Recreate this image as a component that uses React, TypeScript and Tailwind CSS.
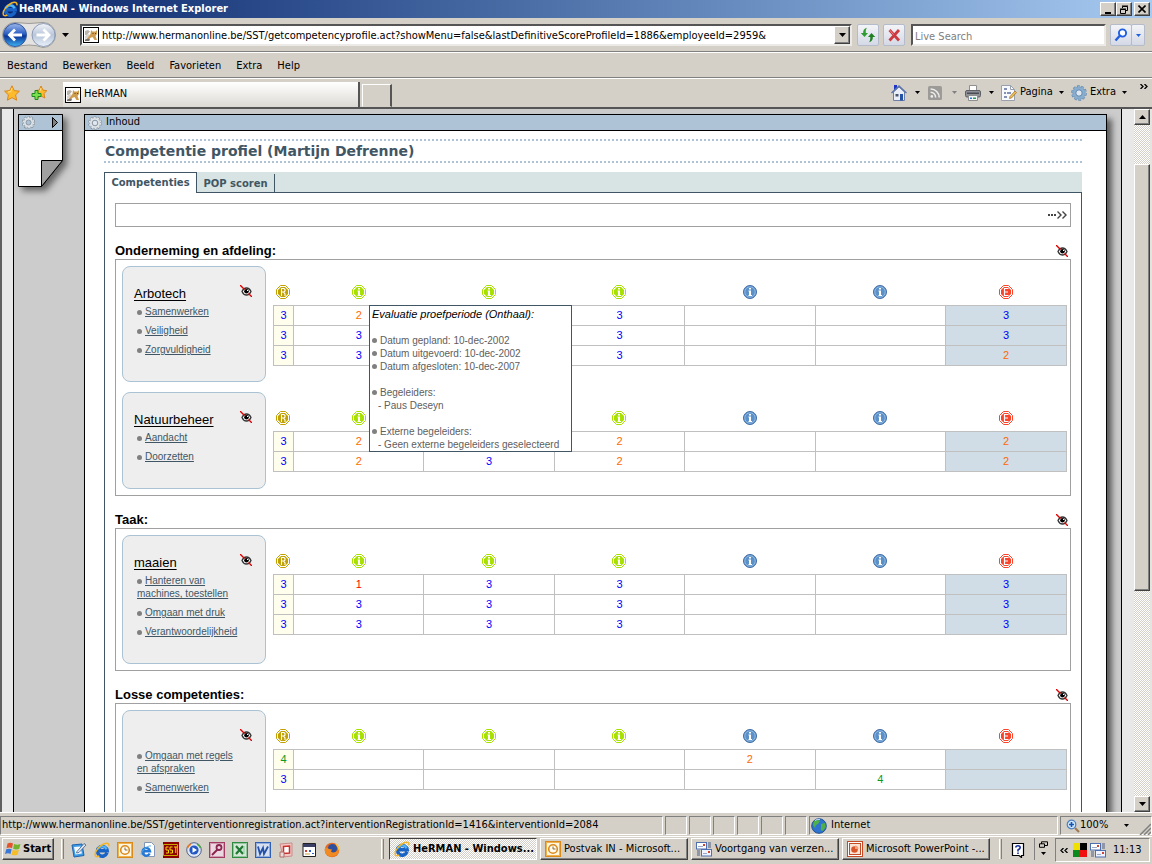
import type { ReactNode } from "react";

type Score = number | null;

interface Group {
  title?: string;
  items: string[];
  scores: Score[][];
  tooltip?: boolean;
}

const sections: { title: string; groups: Group[] }[] = [
  {
    title: "Onderneming en afdeling:",
    groups: [
      {
        title: "Arbotech",
        items: ["Samenwerken", "Veiligheid", "Zorgvuldigheid"],
        scores: [
          [3, 2, null, 3, null, null, 3],
          [3, 3, null, 3, null, null, 3],
          [3, 3, null, 3, null, null, 2],
        ],
        tooltip: true,
      },
      {
        title: "Natuurbeheer",
        items: ["Aandacht", "Doorzetten"],
        scores: [
          [3, 2, null, 2, null, null, 2],
          [3, 2, 3, 2, null, null, 2],
        ],
      },
    ],
  },
  {
    title: "Taak:",
    groups: [
      {
        title: "maaien",
        items: [
          "Hanteren van machines, toestellen",
          "Omgaan met druk",
          "Verantwoordelijkheid",
        ],
        scores: [
          [3, 1, 3, 3, null, null, 3],
          [3, 3, 3, 3, null, null, 3],
          [3, 3, 3, 3, null, null, 3],
        ],
      },
    ],
  },
  {
    title: "Losse competenties:",
    groups: [
      {
        items: ["Omgaan met regels en afspraken", "Samenwerken"],
        scores: [
          [4, null, null, null, 2, null, null],
          [3, null, null, null, null, 4, null],
        ],
      },
    ],
  },
];

const scoreColors: Record<number, string> = {
  1: "text-[#ff0000]",
  2: "text-[#ff6a00]",
  3: "text-[#0000ff]",
  4: "text-[#0a9a1e]",
};

const raised =
  "border border-t-white border-l-white border-r-[#404040] border-b-[#404040] shadow-[inset_-1px_-1px_0_#808080] bg-[#d4d0c8]";
const sunken =
  "border border-t-[#808080] border-l-[#808080] border-r-white border-b-white";
const checker =
  "bg-[repeating-conic-gradient(#ffffff_0_25%,#d4d0c8_0_50%)] bg-[length:2px_2px]";

/* ---------- icons ---------- */

const IeIcon = ({ className = "size-4" }: { className?: string }) => (
  <svg viewBox="0 0 16 16" className={`shrink-0 ${className}`}>
    <path
      d="M13 10.8A4.900 4.900 0 1 1 13.200 8.700H5"
      fill="none"
      stroke="#1a63c6"
      strokeWidth="3.4"
    />
    <path
      d="M12.600 7.200A4.900 4.900 0 0 0 3.800 7.200"
      fill="none"
      stroke="#4fb3f6"
      strokeWidth="2.2"
    />
    <path
      d="M14.800 4.400C15.600 1.400 13 .4 9.600 2 5.400 3.900 1.200 9 1.100 12.400c0 2.600 2.200 2.800 4.200 1.600"
      fill="none"
      stroke="#f2b52a"
      strokeWidth="1.5"
    />
  </svg>
);

const FoxIcon = () => (
  <svg viewBox="0 0 16 16" className="size-4 shrink-0">
    <rect x=".5" y=".5" width="15" height="15" fill="#fff" stroke="#000" />
    <path d="M2 4l3-1 2 1.5L4 8H2z" fill="#b9b4ac" />
    <path d="M2 9l3-2 2 1-2 3-3 1z" fill="#d8d4cc" />
    <path d="M8 3l1.500 1.500h3L14 3v4l-1.500 2L14 13h-2.500L9.500 10 7 11l-1 3-3-.5L6 9l1.500-2z" fill="#cf9c4e" />
    <path d="M9.500 6h1v1h-1zM12 6h1v1h-1z" fill="#6b431a" />
    <path d="M2 12.500l3-1 2 1-1 1.500H2z" fill="#77716a" />
  </svg>
);

const Caret = ({ color = "#000" }: { color?: string }) => (
  <svg viewBox="0 0 5 3" className="h-[3px] w-[5px] shrink-0">
    <path d="M0 0h5L2.5 3z" fill={color} />
  </svg>
);

const BigCaret = ({ up = false }: { up?: boolean }) => (
  <svg viewBox="0 0 7 4" className="h-1 w-[7px] shrink-0">
    <path d={up ? "M0 4h7L3.5 0z" : "M0 0h7L3.5 4z"} fill="#000" />
  </svg>
);

const NavButtons = () => (
  <svg viewBox="0 0 56 28" className="h-7 w-14 shrink-0">
    <defs>
      <linearGradient id="back" x1="0" y1="0" x2="0" y2="1">
        <stop offset="0" stopColor="#9db8ea" />
        <stop offset=".45" stopColor="#2c5fc4" />
        <stop offset=".55" stopColor="#0b3596" />
        <stop offset="1" stopColor="#3fb4f5" />
      </linearGradient>
      <linearGradient id="fwd" x1="0" y1="0" x2="0" y2="1">
        <stop offset="0" stopColor="#f2f5fa" />
        <stop offset=".5" stopColor="#b9c6da" />
        <stop offset="1" stopColor="#e9f1fb" />
      </linearGradient>
    </defs>
    <path
      d="M14 1.500q14 2 28 0a12.500 12.500 0 0 1 0 25q-14-5-28 0a12.500 12.500 0 0 1 0-25z"
      fill="#e4e3e2"
      stroke="#9c9a98"
    />
    <circle cx="14" cy="14" r="11.5" fill="url(#back)" stroke="#35579c" />
    <circle cx="42.500" cy="14" r="11.5" fill="url(#fwd)" stroke="#8d9bb4" />
    <path d="M21 14H9M14 8.500L8.500 14l5.500 5.500" fill="none" stroke="#fff" strokeWidth="2.8" />
    <path d="M35.500 14h12M42.500 8.500L48 14l-5.500 5.500" fill="none" stroke="#fff" strokeWidth="2.8" />
  </svg>
);

const Star = ({ add = false }: { add?: boolean }) => (
  <svg viewBox="0 0 16 16" className="size-4 shrink-0">
    <path
      d={
        add
          ? "M10 1l2 4.200 3.800.4-2.800 3 .8 4.400-3.800-2-3 1.500L7 9 4.500 5.600 8.300 5z"
          : "M8 .8l2.200 4.800 5.200.6-3.800 3.600 1 5.400L8 12.600l-4.600 2.600 1-5.400L.6 6.200l5.200-.6z"
      }
      fill="#fdbb2c"
      stroke="#d9861a"
    />
    <path d={add ? "M10 3l-1 3" : "M8 3L6.800 6.600 4 7"} stroke="#ffe28a" fill="none" />
    {add && (
      <path
        d="M4 5.500h3v3h3v3H7v3H4v-3H1v-3h3z"
        fill="#7be04e"
        stroke="#1c8a1c"
      />
    )}
  </svg>
);

const GearIcon = ({
  className = "size-4",
  color = "#8aaed0",
  edge = "#5f87ad",
}: {
  className?: string;
  color?: string;
  edge?: string;
}) => (
  <svg viewBox="0 0 16 16" className={`shrink-0 ${className}`}>
    <circle cx="8" cy="8" r="6.6" fill="none" stroke={edge} strokeWidth="2.4" strokeDasharray="2.6 1.547" />
    <circle cx="8" cy="8" r="6.2" fill={color} stroke={edge} strokeWidth=".6" />
    <circle cx="8" cy="8" r="6.2" fill="none" stroke={color} strokeWidth="2" strokeDasharray="2 1.895" />
    <circle cx="8" cy="8" r="3.2" fill="#dfe8f0" stroke={edge} strokeWidth="1" />
  </svg>
);

const HomeIcon = () => (
  <svg viewBox="0 0 16 16" className="size-4">
    <path d="M3 0h3v5H3z" fill="#1d35c9" />
    <path d="M2.500 7L8 2l5.500 5v8.500h-11z" fill="#e9eef7" stroke="#6d7fa8" />
    <path d="M.5 8L8 1l7.500 7" fill="none" stroke="#5a73ad" strokeWidth="1.4" />
    <path d="M9 9h3v6.500H9z" fill="#2450a8" />
    <path d="M4.500 9h3v2.500h-3z" fill="#46556b" />
  </svg>
);

const RssIcon = () => (
  <svg viewBox="0 0 14 14" className="size-3.5">
    <rect width="14" height="14" rx="1.5" fill="#9c9b98" />
    <circle cx="3.800" cy="10.400" r="1.3" fill="#eee" />
    <path
      d="M2.600 6.300a5 5 0 0 1 5 5.200M2.600 3a8.400 8.400 0 0 1 8.600 8.500"
      fill="none"
      stroke="#eee"
      strokeWidth="1.5"
    />
  </svg>
);

const PrinterIcon = () => (
  <svg viewBox="0 0 16 16" className="size-4">
    <path d="M4.500.5h7V6h-7z" fill="#fff" stroke="#8f8f8f" />
    <rect x=".5" y="5.500" width="15" height="6.500" rx="1.5" fill="#8e9298" stroke="#5c5f65" />
    <path d="M2 7.500h12v1.500H2z" fill="#4a4d52" />
    <path d="M3.500 10.500h9v5h-9z" fill="#f5f8fb" stroke="#8f8f8f" />
    <path d="M5 12.500h2v1.500H5z" fill="#2c7ad6" />
    <path d="M8 12.500h3v1.500H8z" fill="#2a9d5f" />
  </svg>
);

const PageIcon = () => (
  <svg viewBox="0 0 16 16" className="size-4">
    <path d="M.5.500h9l4 4v11H.5z" fill="#f8f9fc" stroke="#98a0ae" />
    <path d="M9.500.5v4h4" fill="none" stroke="#98a0ae" />
    <path d="M3 4h3M3 8h2m1 0h4M3 12h3" stroke="#5d6c9c" strokeWidth="1.3" />
    <path d="M8.500 13.500l.5-2 5-5.500 1.500 1.500-5 5.500z" fill="#efc050" stroke="#9b6c2c" strokeWidth=".7" />
  </svg>
);

const RefreshIcon = () => (
  <svg viewBox="0 0 16 16" className="size-4">
    <path d="M7 .8C4 1.600 3 3.600 3.200 6H.8l3.700 4 3.500-4H5.800C5.500 4 6 2 7 .8z" fill="#2f9c2f" />
    <path d="M9 15.200c3-.8 4-2.800 3.800-5.200h2.400l-3.700-4L8 10h2.200c.3 2-.2 4-1.200 5.200z" fill="#1f7f22" />
  </svg>
);

const StopIcon = () => (
  <svg viewBox="0 0 14 14" className="size-3.5">
    <path d="M2.500 2l9.500 10.500M12 2L2.500 12.500" stroke="#cb3a3e" strokeWidth="2.8" />
    <path d="M2.500 2l4 4.500" stroke="#ec8c8c" strokeWidth="1" />
  </svg>
);

const SearchIcon = () => (
  <svg viewBox="0 0 14 14" className="size-3.5">
    <circle cx="8.500" cy="5" r="3.6" fill="#fff" stroke="#1f5fe0" strokeWidth="1.9" />
    <path d="M5.800 7.800L1.500 12.500" stroke="#1f5fe0" strokeWidth="2.4" />
  </svg>
);

const HiddenEye = () => (
  <svg viewBox="0 0 12 12" className="size-3">
    <path d="M2 6.500Q3.500 3 6.500 3T11 6.500Q9.500 10 6.500 10T2 6.500z" fill="#fff" stroke="#333" strokeWidth="1.3" />
    <circle cx="6.500" cy="6.300" r="2.3" fill="#000" />
    <path d="M7 5h1v1H7z" fill="#fff" />
    <path d="M0 0l4.500 4.500M8.500 8.500L12 12" stroke="#e00000" strokeWidth="1.4" />
  </svg>
);

const Octagon = ({ color, kind }: { color: string; kind: "R" | "i" | "E" }) => (
  <svg viewBox="0 0 14 14" className="size-3.5">
    <path d="M4.500.500h5l4 4v5l-4 4h-5l-4-4v-5z" fill="#fff" stroke={color} />
    <path d="M5 2h4l3 3v4l-3 3H5L2 9V5z" fill={color} />
    {kind === "i" && <path d="M6 3h2v1.500H6zM5.500 5.500H8V10h1v1H5.500v-1H6V6.500h-.5z" fill="#fff" />}
    {kind === "R" && (
      <path d="M5.500 11V3.500H8l1 1V6L8 7H5.500M7.500 7L9 9v2" fill="none" stroke="#fff" strokeWidth="1.1" />
    )}
    {kind === "E" && <path d="M9.500 3.500H5.500v7h4M5.500 7h3.500" fill="none" stroke="#fff" strokeWidth="1.2" />}
  </svg>
);

const BlueInfo = () => (
  <svg viewBox="0 0 14 14" className="size-3.5">
    <circle cx="7" cy="7" r="6.5" fill="#5b91c9" stroke="#3f6ca6" />
    <circle cx="7" cy="7" r="5.2" fill="none" stroke="#9cc0e4" strokeWidth=".8" />
    <path d="M6 3h2v1.500H6zM5.500 5.500H8V10h1v1H5.500v-1H6V6.500h-.5z" fill="#fff" />
  </svg>
);

const Windows = () => (
  <svg viewBox="0 0 16 16" className="size-4">
    <path d="M2.500 2.500q3-1.500 5.500 0L7 7.200q-2.500-1.200-5.500 0z" fill="#e5532a" />
    <path d="M9 3q3 1.500 6.500 0l-1.300 4.800q-3 1.200-6 0z" fill="#73b32c" />
    <path d="M1.200 8.300q3-1.300 5.500 0l-1.200 4.700q-2.500-1.300-5.500 0z" fill="#3a78d8" />
    <path d="M7.700 8.800q3 1.300 6.200 0l-1.400 4.900q-3 1.300-6 0z" fill="#f5bd27" />
  </svg>
);

const OutlookIcon = () => (
  <svg viewBox="0 0 16 16" className="size-4 shrink-0">
    <rect x=".5" y=".5" width="15" height="15" fill="#fdf0cf" stroke="#d98a1c" />
    <rect x="1.500" y="1.500" width="13" height="13" fill="#fff6e0" stroke="#efb24c" />
    <circle cx="8" cy="8" r="4.3" fill="#fffaf0" stroke="#d98a1c" strokeWidth="1.6" />
    <path d="M8 5.500V8h2.500" fill="none" stroke="#8a6a30" />
  </svg>
);

const MailIcon = () => (
  <svg viewBox="0 0 16 16" className="size-4 shrink-0">
    <rect x=".5" y="1.500" width="10" height="6.500" fill="#fff" stroke="#4e6fb0" />
    <path d="M7 3h2v2H7z" fill="#d2432f" />
    <path d="M12 2h3M12 4h3M12 6h3M1 10h3M1 12h3M1 14h3" stroke="#4b5f85" />
    <rect x="5.500" y="8.500" width="10" height="6.500" fill="#eef3ff" stroke="#4e6fb0" />
    <path d="M12 10h2v2h-2z" fill="#d2432f" />
    <path d="M2 5.500h5M7 12.500h4" stroke="#9aa9c9" />
  </svg>
);

const PowerPointIcon = () => (
  <svg viewBox="0 0 16 16" className="size-4 shrink-0">
    <rect x=".5" y=".5" width="15" height="15" fill="#fff" stroke="#c34a25" />
    <rect x="2.500" y="2.500" width="11" height="11" fill="#fbe3d6" stroke="#c34a25" />
    <circle cx="7.500" cy="8.500" r="3.3" fill="#d9552c" />
    <path d="M8 8V4.500A3.500 3.500 0 0 1 11.500 8z" fill="#f5a079" />
  </svg>
);

// square office icon with a drawn mark inside
const OfficeTile = ({ color, children }: { color: string; children: ReactNode }) => (
  <svg viewBox="0 0 16 16" className="size-4">
    <rect x=".5" y=".5" width="15" height="15" fill="#fff" stroke={color} />
    <rect x="1.500" y="1.500" width="13" height="13" fill={color} fillOpacity=".2" stroke={color} strokeOpacity=".45" />
    {children}
  </svg>
);

const quickLaunch: { name: string; icon: ReactNode }[] = [
  {
    name: "Bureaublad weergeven",
    icon: (
      <svg viewBox="0 0 16 16" className="size-4">
        <path d="M1 3l10-1 2 11.500-10 1.500z" fill="#3d9de6" stroke="#1c62ae" />
        <path d="M3 5l6.500-.6 1.400 7L4.500 12.500z" fill="#f4f9ff" />
        <path d="M6 9.500l7-8 2 1.500-7 7.500-2.500.5z" fill="#d9e2ee" stroke="#3f5f88" strokeWidth=".8" />
      </svg>
    ),
  },
  { name: "Internet Explorer", icon: <IeIcon /> },
  { name: "Outlook", icon: <OutlookIcon /> },
  {
    name: "Webpagina",
    icon: (
      <svg viewBox="0 0 16 16" className="size-4">
        <path d="M4.500.500h7l3 3v11h-10z" fill="#fff" stroke="#8496b8" />
        <path d="M9.700 11.500A3.800 3.800 0 1 1 10 9.200H3.500" fill="none" stroke="#2478d6" strokeWidth="2.4" />
        <path d="M11 4C8 3 1 9 1 12.500" fill="none" stroke="#5aaef0" />
      </svg>
    ),
  },
  {
    name: "SST",
    icon: (
      <svg viewBox="0 0 16 16" className="size-4">
        <rect width="16" height="16" fill="#8c0000" />
        <path d="M.5 2.500h14v11H.5z" fill="none" stroke="#c8a800" />
        <path
          d="M5.500 5H3v3h2.500v3H3M9.500 5H7v3h2.500v3H7M11 5h3.500M12.800 5v6"
          fill="none"
          stroke="#f5d800"
        />
      </svg>
    ),
  },
  {
    name: "Media Player",
    icon: (
      <svg viewBox="0 0 16 16" className="size-4">
        <circle cx="8" cy="8" r="7.3" fill="#dfe7f5" stroke="#53638c" />
        <circle cx="8" cy="8" r="4.6" fill="#2358c4" />
        <path d="M1.500 6A7 7 0 0 1 5 2" stroke="#e87a28" strokeWidth="1.6" fill="none" />
        <path d="M11 2a7 7 0 0 1 3.500 4" stroke="#4ca83c" strokeWidth="1.6" fill="none" />
        <path d="M6.500 5.200v5.600L11 8z" fill="#fff" />
      </svg>
    ),
  },
  {
    name: "Access",
    icon: (
      <OfficeTile color="#a23a62">
        <circle cx="10" cy="5.500" r="2.500" fill="none" stroke="#8c2450" strokeWidth="1.8" />
        <path d="M8.500 7.500L3 13" stroke="#8c2450" strokeWidth="2" />
      </OfficeTile>
    ),
  },
  {
    name: "Excel",
    icon: (
      <OfficeTile color="#2d8a3e">
        <path d="M4 4l7 8M11 4l-7 8" stroke="#1f7a32" strokeWidth="2.2" />
        <path d="M12 4v8" stroke="#8cc39a" />
      </OfficeTile>
    ),
  },
  {
    name: "Word",
    icon: (
      <OfficeTile color="#2f5fb5">
        <path d="M3 4.500L5 12l3-6 1 6 4-7.500" fill="none" stroke="#2450a8" strokeWidth="1.8" />
      </OfficeTile>
    ),
  },
  {
    name: "Office",
    icon: (
      <svg viewBox="0 0 16 16" className="size-4">
        <path d="M2 2l12-1v13l-9 1z" fill="#f1c6c3" stroke="#c98a8a" />
        <path d="M5.500 4.500l6-.5v7l-6 .5z" fill="#fff" stroke="#c8322e" strokeWidth="1.5" />
        <path d="M2 10h4v5H2z" fill="#e5ddd8" stroke="#b56a66" />
      </svg>
    ),
  },
  {
    name: "Toepassing",
    icon: (
      <svg viewBox="0 0 16 16" className="size-4">
        <path d="M2 1.500h12.500v13H2z" fill="#fff" stroke="#222" />
        <path d="M2 2h12v3H2z" fill="#3a3f66" />
        <path d="M4 8h2v2H4z" fill="#d43c2c" />
        <path d="M8 8h2v2H8zM11 11h2v1h-2z" fill="#2f5fc4" />
        <path d="M4 12h5" stroke="#d0a030" />
      </svg>
    ),
  },
  {
    name: "Firefox",
    icon: (
      <svg viewBox="0 0 16 16" className="size-4">
        <circle cx="8" cy="8" r="7.3" fill="#e6691e" />
        <circle cx="8.500" cy="6.500" r="4.6" fill="#2d4f9e" />
        <path d="M1 6q2-1 4 1l3 .5-1 2q2 2 5.500 0 2-1.500 2-4 1.500 5-2 7.500-5 3.500-9.500 0Q0 10.500 1 6z" fill="#f08a22" />
        <path d="M12 2q3 3 3 6" stroke="#fbc53c" strokeWidth="1.2" fill="none" />
      </svg>
    ),
  },
];

/* ---------- browser chrome ---------- */

const TitleBar = () => (
  <div className="flex h-[18px] items-center bg-linear-to-r from-[#0a246a] to-[#a6caf0] px-0.5 text-[11px] font-bold text-white">
    <IeIcon />
    <h1 className="ml-px flex-1 truncate">HeRMAN - Windows Internet Explorer</h1>
    <div className="flex text-black">
      <button aria-label="Minimaliseren" className={`flex h-3.5 w-4 justify-center pt-[9px] ${raised}`}>
        <span className="h-0.5 w-1.5 bg-black" />
      </button>
      <button aria-label="Herstellen" className={`flex h-3.5 w-4 items-center justify-center ${raised}`}>
        <svg viewBox="0 0 9 9" className="size-[9px]">
          <path d="M2.500 3V1.500h5v4H6M.5 4.500h5v4h-5zM2 1h6M0 4h6" fill="none" stroke="#000" />
        </svg>
      </button>
      <button aria-label="Sluiten" className={`ml-0.5 flex h-3.5 w-4 items-center justify-center ${raised}`}>
        <svg viewBox="0 0 8 8" className="size-2">
          <path d="M.5.500l7 7M7.500.500l-7 7" stroke="#000" strokeWidth="1.6" />
        </svg>
      </button>
    </div>
  </div>
);

const glassButton =
  "flex h-[22px] items-center justify-center rounded-xs border border-[#b4bccb] bg-linear-to-b from-[#f3f4f7] to-[#d5d9e6]";
const field =
  "border-2 border-t-[#555] border-r-[#eceae6] border-b-[#eceae6] border-l-[#555] bg-white";

const AddressBar = () => (
  <div className="flex h-[33px] items-center pt-px pr-[7px] pl-px">
    <NavButtons />
    <button aria-label="Recente pagina's" className="mr-[11px] ml-1 flex w-2 justify-center">
      <BigCaret />
    </button>
    <div className={`flex h-[22px] flex-1 items-center pl-px ${field}`}>
      <FoxIcon />
      <input
        aria-label="Adres"
        className="ml-[3px] min-w-0 flex-1 pt-0.5 outline-none"
        defaultValue="http://www.hermanonline.be/SST/getcompetencyprofile.act?showMenu=false&lastDefinitiveScoreProfileId=1886&employeeId=2959&"
      />
      <button aria-label="Adreslijst" className={`flex h-[18px] w-4 items-center justify-center ${raised}`}>
        <BigCaret />
      </button>
    </div>
    <button aria-label="Vernieuwen" className={`ml-[5px] w-[22px] ${glassButton}`}>
      <RefreshIcon />
    </button>
    <button aria-label="Stoppen" className={`mr-1.5 ml-1 w-[22px] ${glassButton}`}>
      <StopIcon />
    </button>
    <input
      aria-label="Live Search"
      placeholder="Live Search"
      className={`h-[22px] w-[195px] px-0.5 pt-0.5 outline-none placeholder:text-[#808080] ${field}`}
    />
    <button aria-label="Zoeken" className={`ml-1 w-[22px] ${glassButton}`}>
      <SearchIcon />
    </button>
    <button aria-label="Zoekopties" className={`-ml-px w-3.5 ${glassButton}`}>
      <Caret color="#1f5fe0" />
    </button>
  </div>
);

const MenuBar = () => (
  <nav className="flex h-[26px] items-center gap-[15px] border-t border-[#808080] pt-[3px] pl-[7px] shadow-[inset_0_1px_0_#fff]">
    {["Bestand", "Bewerken", "Beeld", "Favorieten", "Extra", "Help"].map((item) => (
      <button key={item}>{item}</button>
    ))}
  </nav>
);

const TabBar = () => (
  <div className="flex h-[30px] items-center border-t border-[#808080] pl-1 shadow-[inset_0_1px_0_#fff]">
    <button aria-label="Favorieten">
      <Star />
    </button>
    <button aria-label="Toevoegen aan favorieten" className="ml-[11px]">
      <Star add />
    </button>
    <button className="mt-1 ml-4 flex h-[25px] w-[297px] items-center gap-[3px] border-r-2 border-[#555] bg-linear-to-b from-white to-[#dcdad4] pl-0.5">
      <FoxIcon />
      HeRMAN
    </button>
    <button
      aria-label="Nieuw tabblad"
      className="mt-1.5 ml-0.5 h-[23px] w-[30px] border border-r-2 border-t-white border-r-[#555] border-b-transparent border-l-white"
    />
    <div className="ml-auto flex items-center">
      <button aria-label="Startpagina" className="flex items-center gap-2">
        <HomeIcon />
        <Caret />
      </button>
      <button aria-label="Feeds" className="ml-2 flex items-center gap-2.5">
        <RssIcon />
        <Caret color="#808080" />
      </button>
      <button aria-label="Afdrukken" className="ml-2 flex items-center gap-2">
        <PrinterIcon />
        <Caret />
      </button>
      <button className="ml-[7px] flex items-center">
        <PageIcon />
        <span className="mr-1.5 ml-[3px]">Pagina</span>
        <Caret />
      </button>
      <button className="ml-[7px] flex items-center">
        <GearIcon />
        <span className="mr-1.5 ml-[3px]">Extra</span>
        <Caret />
      </button>
      <button aria-label="Meer" className="mr-1 mb-3 ml-[13px]">
        <svg viewBox="0 0 8 5" className="h-[5px] w-2">
          <path d="M.5 0L3 2.500.5 5M4.500 0L7 2.500 4.500 5" fill="none" stroke="#000" strokeWidth="1.3" />
        </svg>
      </button>
    </div>
  </div>
);

const Scrollbar = () => (
  <div className={`flex w-[18px] shrink-0 flex-col border-r-2 border-[#e6e4df] ${checker}`}>
    <button aria-label="Omhoog" className={`flex h-4 items-center justify-center ${raised}`}>
      <BigCaret up />
    </button>
    <div className="flex-[39]" />
    <div className={`flex-[427] ${raised}`} />
    <div className="flex-[206]" />
    <button aria-label="Omlaag" className={`flex h-4 items-center justify-center ${raised}`}>
      <BigCaret />
    </button>
  </div>
);

/* ---------- page ---------- */

const Bullet = () => (
  <span className="mr-[3px] inline-block size-[5px] rounded-full bg-[#808080] align-middle" />
);

const Tooltip = () => (
  <div
    role="tooltip"
    className="absolute -top-px left-[75px] z-10 w-[203px] border border-[#415664] bg-white px-0.5 pt-0.5 text-left text-[10px] leading-[13px] whitespace-nowrap text-[#606060]"
  >
    <p className="mb-[13px] text-[11px] leading-[13px] text-black italic">
      Evaluatie proefperiode (Onthaal):
    </p>
    <p><Bullet />Datum gepland: 10-dec-2002</p>
    <p><Bullet />Datum uitgevoerd: 10-dec-2002</p>
    <p className="mb-[13px]"><Bullet />Datum afgesloten: 10-dec-2007</p>
    <p><Bullet />Begeleiders:</p>
    <p className="mb-[13px] pl-1.5">- Paus Deseyn</p>
    <p><Bullet />Externe begeleiders:</p>
    <p className="pl-1.5">- Geen externe begeleiders geselecteerd</p>
  </div>
);

const CompetencyCard = ({ title, items }: Group) => (
  <div className="relative w-36 shrink-0 rounded-lg border border-[#a9c3d5] bg-[#eeeeee] pt-[19px] pb-[19px]">
    <div className="h-[19px] pl-[11px] text-[13px] leading-4">
      {title && (
        <a href="#" className="text-black underline underline-offset-2">
          {title}
        </a>
      )}
    </div>
    <button aria-label="Verbergen" className="absolute top-[18px] right-[13px]">
      <HiddenEye />
    </button>
    <ul className="pl-3.5 text-[10px] leading-[13px] text-[#415664]">
      {items.map((item) => (
        <li key={item} className="mb-1.5 w-[104px]">
          <Bullet />
          <a href="#" className="underline underline-offset-1">
            {item}
          </a>
        </li>
      ))}
    </ul>
  </div>
);

const columnIcons: { name: string; icon: ReactNode }[] = [
  { name: "Vereist", icon: <Octagon color="#c2a000" kind="R" /> },
  { name: "Evaluatie 1", icon: <Octagon color="#a8e000" kind="i" /> },
  { name: "Evaluatie 2", icon: <Octagon color="#a8e000" kind="i" /> },
  { name: "Evaluatie 3", icon: <Octagon color="#a8e000" kind="i" /> },
  { name: "Gepland 1", icon: <BlueInfo /> },
  { name: "Gepland 2", icon: <BlueInfo /> },
  { name: "Eindscore", icon: <Octagon color="#f8452c" kind="E" /> },
];

const ScoreTable = ({ scores, tooltip }: Group) => (
  <table className="w-full table-fixed border-collapse text-center text-[11px]">
    <thead>
      <tr className="h-[39px]">
        {columnIcons.map((col, i) => (
          <th
            key={col.name}
            aria-label={col.name}
            className={`p-0 pt-3.5 ${i === 0 ? "w-5" : i === 6 ? "w-[121px]" : ""}`}
          >
            <div className={`flex justify-center ${i === 0 ? "pr-0.5" : ""}`}>{col.icon}</div>
          </th>
        ))}
      </tr>
    </thead>
    <tbody>
      {scores.map((row, r) => (
        <tr key={r} className="h-5">
          {row.map((score, c) => (
            <td
              key={c}
              className={`relative border border-[#c0c0c0] p-0 leading-[19px] ${
                c === 0 ? "bg-[#fffdec]" : c === 6 ? "bg-[#d0dde6]" : ""
              } ${score ? scoreColors[score] : ""}`}
            >
              {score}
              {tooltip && r === 0 && c === 1 && <Tooltip />}
            </td>
          ))}
        </tr>
      ))}
    </tbody>
  </table>
);

const Section = ({ title, groups }: { title: string; groups: Group[] }) => (
  <section className="mt-4">
    <header className="flex items-center justify-between pr-[3px]">
      <h3 className="text-[13px] leading-4 font-bold">{title}</h3>
      <button aria-label="Verbergen">
        <HiddenEye />
      </button>
    </header>
    <div className="flex flex-col gap-2.5 border border-[#a0a0a0] py-1.5 pr-[3px] pl-1.5">
      {groups.map((group) => (
        <div key={group.items[0]} className="flex items-start gap-[7px]">
          <CompetencyCard {...group} />
          <ScoreTable {...group} />
        </div>
      ))}
    </div>
  </section>
);

const SidePanel = () => (
  <div className="mt-[5px] h-[73px] w-[45px] shrink-0">
    <svg viewBox="0 0 45 73" className="h-[73px] w-[45px] drop-shadow-[4px_4px_3px_rgba(0,0,0,0.5)]">
      <path d="M.5.500h44v46L23.500 72.500H.5z" fill="#fff" stroke="#000" />
      <path d="M.5.500h44v16H.5z" fill="#aec4d6" stroke="#000" />
      <path d="M23.500 72.500v-26h21z" fill="#a0a0a0" stroke="#000" />
      <path d="M34.500 3.500v10l5-5z" fill="#808080" stroke="#000" />
      <circle cx="10.500" cy="8.500" r="5.400" fill="none" stroke="#7d8893" strokeWidth="2.400" strokeDasharray="2.200 1.193" />
      <circle cx="10.500" cy="8.500" r="5" fill="#dfe4e9" stroke="#7d8893" strokeWidth=".5" />
      <circle cx="10.500" cy="8.500" r="5.200" fill="none" stroke="#dfe4e9" strokeWidth="1.600" strokeDasharray="1.700 1.567" />
      <circle cx="10.500" cy="8.500" r="2.500" fill="#aec4d6" stroke="#8b97a3" />
    </svg>
  </div>
);

const DottedLine = () => (
  <div className="h-0.5 bg-[repeating-linear-gradient(90deg,#aec4d6_0_2px,transparent_2px_4px)]" />
);

const Page = () => (
  <div className="flex min-h-0 flex-1 border-t-2 border-[#555] bg-[#cccccc] font-['Liberation_Sans',Arial,sans-serif] text-black">
    <div className="w-3.5 shrink-0 border-r border-l-2 border-r-black border-l-[#606060] bg-[#e8e8e8]" />
    <div className="flex min-w-0 flex-1 gap-[21px] overflow-hidden pr-3.5 pl-1">
      <SidePanel />
      <main className="mt-[5px] h-[900px] min-w-0 flex-1 border border-black bg-white shadow-[5px_5px_6px_rgba(0,0,0,0.55)]">
        <div className="flex h-4 items-center gap-1 border-b border-black bg-[#aec4d6] pl-[3px] font-['DejaVu_Sans_Condensed','Noto_Sans',sans-serif] text-[11px]">
          <GearIcon className="size-3.5" color="#dfe4e9" edge="#7d8893" />
          Inhoud
        </div>
        <div className="pt-2 pr-6 pl-[19px]">
          <DottedLine />
          <h2 className="pl-px font-['DejaVu_Sans',Verdana,sans-serif] text-[14px] leading-5 font-bold text-[#415664]">
            Competentie profiel (Martijn Defrenne)
          </h2>
          <DottedLine />
          <div
            role="tablist"
            className="mt-[9px] flex h-[21px] items-end border-b border-[#415664] bg-[#d8e4e3] font-['DejaVu_Sans',Verdana,sans-serif] text-[10px] font-bold text-[#415664]"
          >
            <button
              role="tab"
              aria-selected="true"
              className="-mb-px h-[21px] w-[93px] border border-b-0 border-[#415664] bg-white pb-0.5"
            >
              Competenties
            </button>
            <button
              role="tab"
              aria-selected="false"
              className="h-[18px] w-[78px] border-r border-[#415664]"
            >
              POP scoren
            </button>
          </div>
          <div className="h-[800px] border-x border-[#415664] px-2.5 pt-2.5">
            <div className="flex h-6 items-center justify-end border border-[#a0a0a0] pr-[3px]">
              <button aria-label="Uitklappen">
                <svg viewBox="0 0 19 8" className="h-2 w-[19px]">
                  <path d="M0 3h2v2H0zM3 3h2v2H3zM6 3h2v2H6z" fill="#444" />
                  <path d="M9.500.500L13 4 9.500 7.500M14.500.500L18 4l-3.500 3.500" fill="none" stroke="#444" strokeWidth="1.4" />
                </svg>
              </button>
            </div>
            {sections.map((section) => (
              <Section key={section.title} {...section} />
            ))}
          </div>
        </div>
      </main>
    </div>
    <div className="w-[13px] shrink-0 border-l border-black bg-[#e8e8e8]" />
    <Scrollbar />
  </div>
);

const StatusBar = () => (
  <footer className="flex h-6 items-center gap-0.5 border-t border-white pt-0.5">
    <div className={`flex h-[19px] flex-1 items-center truncate pl-px ${sunken}`}>
      http://www.hermanonline.be/SST/getinterventionregistration.act?interventionRegistrationId=1416&interventionId=2084
    </div>
    {[1, 2, 3, 4, 5, 6].map((n) => (
      <div key={n} className={`h-[19px] w-[22px] ${sunken}`} />
    ))}
    <div className={`flex h-[19px] w-[249px] items-center gap-1 pl-px ${sunken}`}>
      <svg viewBox="0 0 16 16" className="size-4">
        <circle cx="8" cy="8" r="7.3" fill="#2d73cf" stroke="#245191" />
        <path d="M3 3q4-2 6 0L7 6 5 7l-1 3-2-3zM10 6l4-1 .8 4-3 4-2-1z" fill="#4fb04a" />
        <path d="M4 2.500q2-1.500 5-1.200" stroke="#cfe5fb" fill="none" />
      </svg>
      Internet
    </div>
    <button className={`flex h-[19px] w-[92px] items-center pl-[5px] ${sunken}`}>
      <svg viewBox="0 0 14 14" className="size-3.5">
        <circle cx="5.500" cy="5.500" r="4.3" fill="#cfe6fb" stroke="#4a7fc0" strokeWidth="1.2" />
        <path d="M5.500 3v5M3 5.500h5" stroke="#1553b5" strokeWidth="1.6" />
        <path d="M9 9l4 4" stroke="#a07850" strokeWidth="2.2" />
      </svg>
      <span className="flex-1 text-left">100%</span>
      <Caret />
      <svg viewBox="0 0 12 12" className="mt-1.5 ml-2.5 size-3">
        <path d="M1 12L12 1M5 12l7-7M9 12l3-3" stroke="#808080" strokeWidth="1.5" />
      </svg>
    </button>
  </footer>
);

const tasks = [
  { label: "HeRMAN - Windows...", icon: <IeIcon />, active: true },
  { label: "Postvak IN - Microsoft...", icon: <OutlookIcon />, active: false },
  { label: "Voortgang van verzen...", icon: <MailIcon />, active: false },
  { label: "Microsoft PowerPoint -...", icon: <PowerPointIcon />, active: false },
];

const Grip = ({ className = "" }: { className?: string }) => (
  <div className={`h-5 w-[3px] border-r border-l border-r-[#808080] border-l-white ${className}`} />
);

const TaskBar = () => (
  <div className="flex h-7 items-start border-t border-white px-0.5 pt-px">
    <button className={`flex h-[22px] w-[52px] items-center gap-0.5 pl-0.5 font-bold ${raised}`}>
      <Windows />
      Start
    </button>
    <Grip className="mt-px ml-[7px]" />
    <div className="mt-1 ml-[7px] flex gap-[7px]">
      {quickLaunch.map((app) => (
        <button key={app.name} aria-label={app.name}>
          {app.icon}
        </button>
      ))}
    </div>
    <Grip className="mt-px ml-auto" />
    <div className="ml-[5px] flex gap-[3px]">
      {tasks.map((task) => (
        <button
          key={task.label}
          className={`flex h-[22px] w-[148px] items-center gap-[3px] pl-1 whitespace-nowrap ${
            task.active
              ? `border border-t-[#404040] border-r-white border-b-white border-l-[#404040] font-bold ${checker}`
              : raised
          }`}
        >
          {task.icon}
          {task.label}
        </button>
      ))}
    </div>
    <Grip className="mt-px ml-[9px]" />
    <button aria-label="Help" className="mt-1 ml-2">
      <svg viewBox="0 0 16 16" className="size-4">
        <path d="M2.500 1.500h11v12h-2v2l-2.500-2H2.500z" fill="#fff" stroke="#000" strokeWidth="1.2" />
        <path d="M5.800 5.500q0-1.700 2.200-1.700t2.200 1.700Q10.200 6.800 8 8v1.500M8 10.500v1.500" fill="none" stroke="#1a2f9c" strokeWidth="1.6" />
      </svg>
    </button>
    <div className="ml-2 h-[22px] w-px bg-[#808080]" />
    <button aria-label="Taalbalk" className="mt-[3px] ml-1 flex flex-col items-center gap-1">
      <svg viewBox="0 0 9 7" className="h-[7px] w-[9px]">
        <path d="M2.500 3V.800h6v3.700H6M.5 2.800h5v3.500h-5z" fill="none" stroke="#000" />
      </svg>
      <Caret />
    </button>
    <div className={`ml-[7px] flex h-6 w-[95px] items-center gap-[3px] pl-1 ${sunken}`}>
      <button aria-label="Verborgen pictogrammen">
        <svg viewBox="0 0 8 5" className="mr-0.5 h-[5px] w-2">
          <path d="M3.500 0L1 2.500 3.500 5M7.500 0L5 2.500 7.500 5" fill="none" stroke="#000" strokeWidth="1.3" />
        </svg>
      </button>
      <svg viewBox="0 0 14 14" className="size-3.5">
        <path d="M0 0h7v7H0z" fill="#f0e000" />
        <path d="M7 0h7v7H7z" fill="#000" />
        <path d="M0 7h7v7H0z" fill="#0c8a1c" />
        <path d="M7 7h7v7H7z" fill="#f01010" />
      </svg>
      <MailIcon />
      <span className="ml-1">11:13</span>
    </div>
  </div>
);

export default function App() {
  return (
    <div className="flex h-screen flex-col overflow-hidden bg-[#d4d0c8] font-['DejaVu_Sans_Condensed','Noto_Sans',sans-serif] text-[11px] text-black">
      <TitleBar />
      <AddressBar />
      <MenuBar />
      <TabBar />
      <Page />
      <StatusBar />
      <TaskBar />
    </div>
  );
}
